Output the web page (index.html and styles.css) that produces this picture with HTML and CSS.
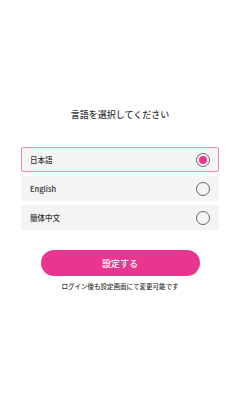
FILE: index.html
```html
<!doctype html>
<html lang="ja">
  <head>
    <meta charset="UTF-8" />
    <meta name="viewport" content="width=device-width, initial-scale=1.0" />
    <title>言語設定</title>
    <link rel="stylesheet" href="styles.css">
  </head>
  <body>
    <div class="container">
      <h1>言語を選択してください</h1>
      <div class="options">
        <div class="option selected">
          <span>日本語</span>
          <span class="radio"></span>
        </div>
        <div class="option">
          <span>English</span>
          <span class="radio"></span>
        </div>
        <div class="option">
          <span>簡体中文</span>
          <span class="radio"></span>
        </div>
      </div>
      <button type="button">設定する</button>
      <p class="note">ログイン後も設定画面にて変更可能です</p>
    </div>
  </body>
</html>
```

FILE: styles.css
```css
body {
  font-family: "Noto Sans CJK JP", "Noto Sans", sans-serif;
  background-color: #ffffff;
  color: #333333;
  margin: 0;
  padding: 0;
}
.container {
  padding: 108px 21px 0;
  display: flex;
  flex-direction: column;
  align-items: center;
}
h1 {
  font-size: 9px;
  font-weight: 500;
  margin: 0 0 25px;
  line-height: 14px;
}
.options {
  width: 100%;
  display: flex;
  flex-direction: column;
  gap: 4px;
}
.option {
  display: flex;
  align-items: center;
  justify-content: space-between;
  height: 25px;
  padding: 0 8px 0 8px;
  box-sizing: border-box;
  background-color: #f4f4f4;
  border: 1px solid transparent;
  border-radius: 2px;
  font-size: 7.5px;
  font-weight: 500;
}
.option.selected {
  border-color: #e68bb5;
}
.radio {
  width: 14px;
  height: 14px;
  box-sizing: border-box;
  border: 1px solid #666666;
  border-radius: 50%;
  display: flex;
  align-items: center;
  justify-content: center;
}
.selected .radio::after {
  content: "";
  width: 8px;
  height: 8px;
  border-radius: 50%;
  background-color: #e8388e;
}
button {
  margin-top: 20px;
  width: 159px;
  height: 26px;
  border: none;
  border-radius: 13px;
  background-color: #ea3590;
  color: #ffffff;
  font-family: inherit;
  font-size: 9px;
  font-weight: 500;
  cursor: pointer;
}
.note {
  margin: 5px 0 0;
  font-size: 6.5px;
  font-weight: 500;
  line-height: 10px;
}
```
